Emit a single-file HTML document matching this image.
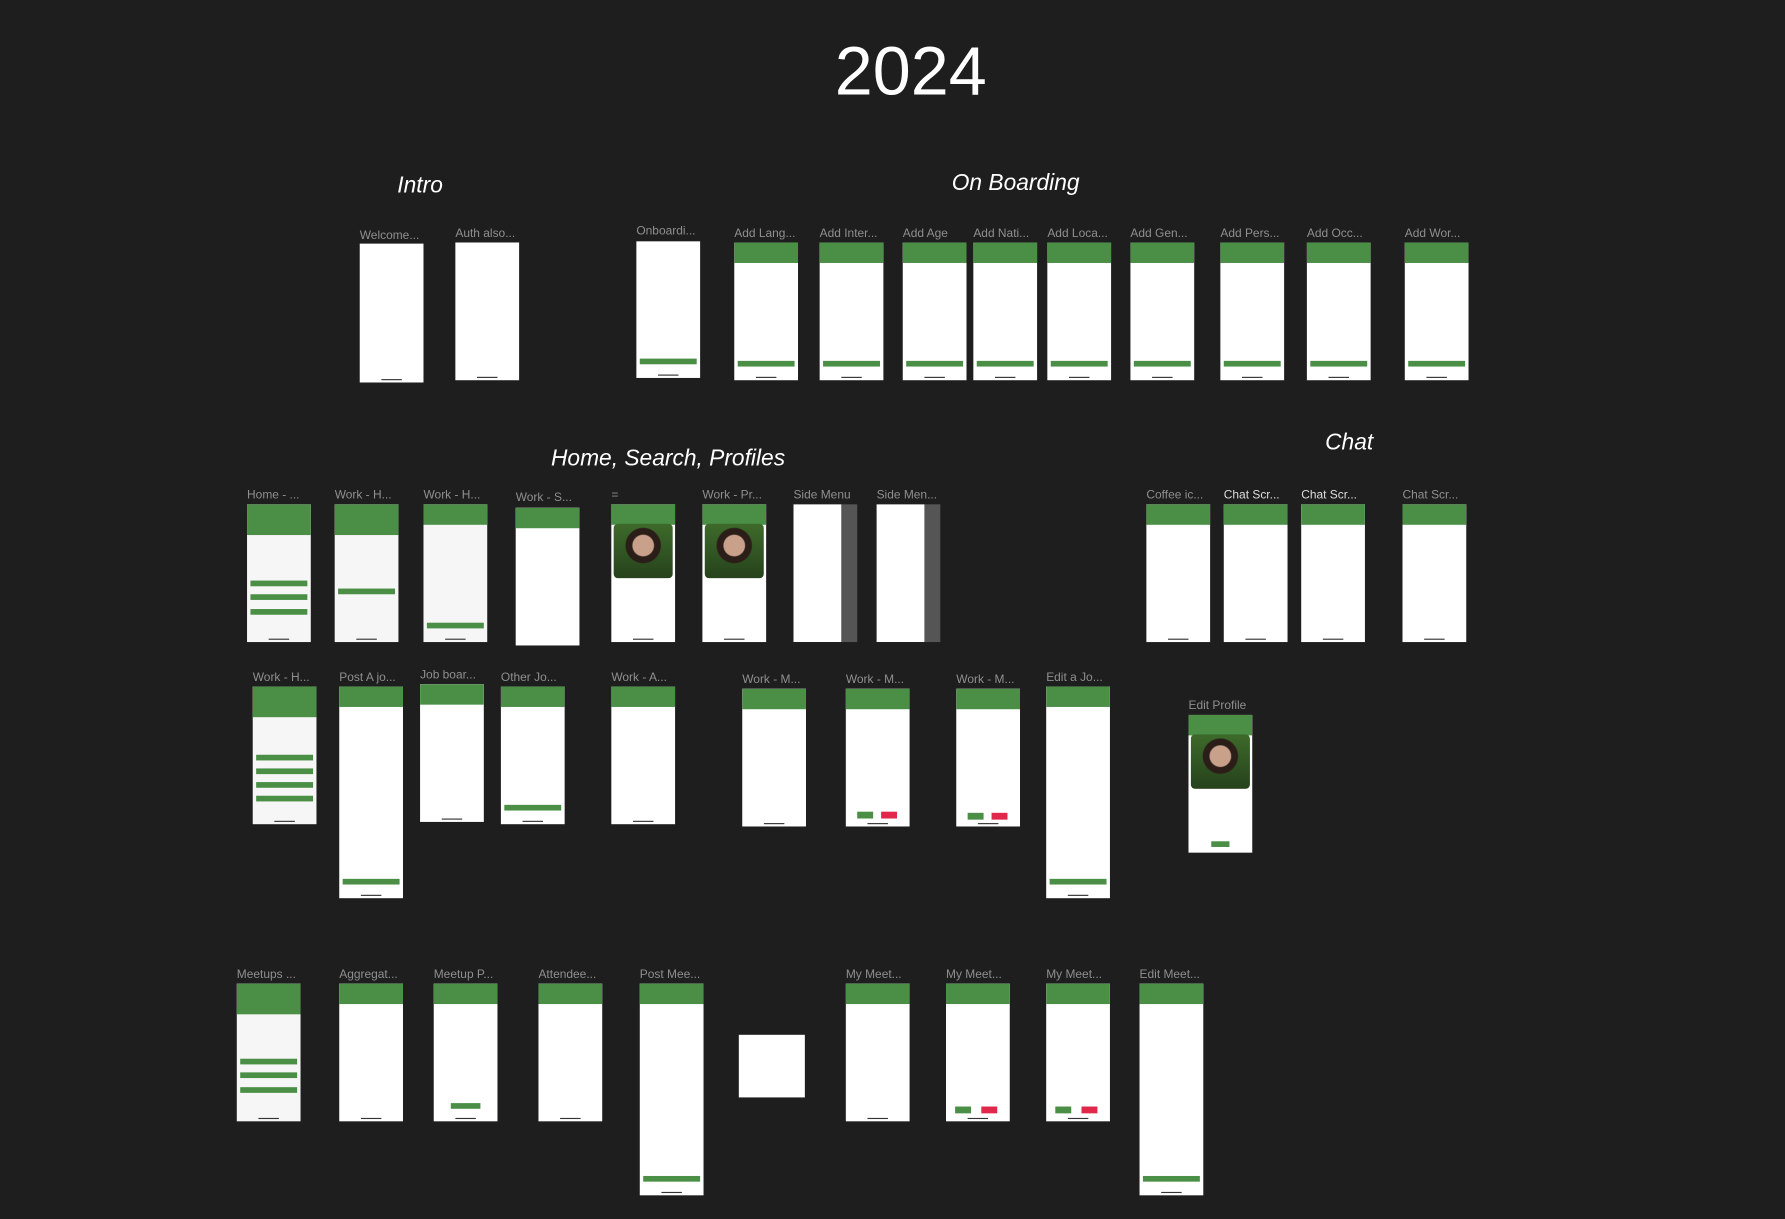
<!DOCTYPE html>
<html><head><meta charset="utf-8"><style>
html,body{margin:0;padding:0;background:#1e1e1e;overflow:hidden}
#s{position:absolute;left:0;top:0;width:1568px;height:1071px;transform:scale(1.1384);transform-origin:0 0;font-family:"Liberation Sans",sans-serif}
.f{position:absolute;background:#fff;width:56px;height:121px;overflow:hidden}
.g{position:absolute;left:0;top:0;width:100%;height:18px;background:#4b8f47}
.G{position:absolute;left:0;top:0;width:100%;height:27px;background:#4b8f47}
.b{position:absolute;left:3px;right:3px;bottom:12px;height:5px;background:#4b8f47}
.h{position:absolute;left:19px;bottom:2px;width:18px;height:1.5px;background:#333}
.l{position:absolute;color:#8f8f8f;font-size:10.5px;white-space:nowrap}
.t{position:absolute;color:#fff;font-style:italic;font-size:20px}
.p{position:absolute;left:2px;top:17px;width:52px;height:48px;border-radius:4px;background:radial-gradient(circle at 50% 40%,#c9a08a 0 9px,#2b1d18 10px 15px,transparent 16px),linear-gradient(#3d6a2a,#26421c)}
.x{position:absolute;left:4px;height:1.5px;background:#ccc}
.m{position:absolute;left:3px;width:50px;height:5px;background:#4b8f47}
</style></head><body><div id="s">
<div style="position:absolute;left:0;width:1600px;top:28px;text-align:center;color:#fff;font-size:60px">2024</div>
<div class="t" style="left:349px;top:152px">Intro</div>
<div class="t" style="left:836px;top:150px">On Boarding</div>
<div class="t" style="left:484px;top:392px">Home, Search, Profiles</div>
<div class="t" style="left:1164px;top:378px">Chat</div>

<!-- row 1 -->
<div class="l" style="left:316px;top:201px">Welcome...</div><div class="f" style="left:316px;top:214px;height:122px"><div class="h"></div></div>
<div class="l" style="left:400px;top:199px">Auth also...</div><div class="f" style="left:400px;top:213px"><div class="h"></div></div>
<div class="l" style="left:559px;top:197px">Onboardi...</div><div class="f" style="left:559px;top:212px;height:120px"><div class="b"></div><div class="h"></div></div>
<div class="l" style="left:645px;top:199px">Add Lang...</div><div class="f" style="left:645px;top:213px"><div class="g"></div><div class="b"></div><div class="h"></div></div>
<div class="l" style="left:720px;top:199px">Add Inter...</div><div class="f" style="left:720px;top:213px"><div class="g"></div><div class="b"></div><div class="h"></div></div>
<div class="l" style="left:793px;top:199px">Add Age</div><div class="f" style="left:793px;top:213px"><div class="g"></div><div class="b"></div><div class="h"></div></div>
<div class="l" style="left:855px;top:199px">Add Nati...</div><div class="f" style="left:855px;top:213px"><div class="g"></div><div class="b"></div><div class="h"></div></div>
<div class="l" style="left:920px;top:199px">Add Loca...</div><div class="f" style="left:920px;top:213px"><div class="g"></div><div class="b"></div><div class="h"></div></div>
<div class="l" style="left:993px;top:199px">Add Gen...</div><div class="f" style="left:993px;top:213px"><div class="g"></div><div class="b"></div><div class="h"></div></div>
<div class="l" style="left:1072px;top:199px">Add Pers...</div><div class="f" style="left:1072px;top:213px"><div class="g"></div><div class="b"></div><div class="h"></div></div>
<div class="l" style="left:1148px;top:199px">Add Occ...</div><div class="f" style="left:1148px;top:213px"><div class="g"></div><div class="b"></div><div class="h"></div></div>
<div class="l" style="left:1234px;top:199px">Add Wor...</div><div class="f" style="left:1234px;top:213px"><div class="g"></div><div class="b"></div><div class="h"></div></div>

<!-- row 2 -->
<div class="l" style="left:217px;top:429px">Home - ...</div><div class="f" style="left:217px;top:443px;background:#f6f6f6"><div class="G"></div><div class="m" style="top:67px"></div><div class="m" style="top:79px"></div><div class="m" style="top:92px"></div><div class="h"></div></div>
<div class="l" style="left:294px;top:429px">Work - H...</div><div class="f" style="left:294px;top:443px;background:#f6f6f6"><div class="G"></div><div class="m" style="top:74px"></div><div class="h"></div></div>
<div class="l" style="left:372px;top:429px">Work - H...</div><div class="f" style="left:372px;top:443px;background:#f6f6f6"><div class="g"></div><div class="m" style="top:104px"></div><div class="h"></div></div>
<div class="l" style="left:453px;top:431px">Work - S...</div><div class="f" style="left:453px;top:446px"><div class="g"></div></div>
<div class="l" style="left:537px;top:429px">=</div><div class="f" style="left:537px;top:443px"><div class="g"></div><div class="p"></div><div class="h"></div></div>
<div class="l" style="left:617px;top:429px">Work - Pr...</div><div class="f" style="left:617px;top:443px"><div class="g"></div><div class="p"></div><div class="h"></div></div>
<div class="l" style="left:697px;top:429px">Side Menu</div><div class="f" style="left:697px;top:443px;background:#555"><div style="position:absolute;left:0;top:0;width:42px;height:121px;background:#fff"></div></div>
<div class="l" style="left:770px;top:429px">Side Men...</div><div class="f" style="left:770px;top:443px;background:#555"><div style="position:absolute;left:0;top:0;width:42px;height:121px;background:#fff"></div></div>
<div class="l" style="left:1007px;top:429px">Coffee ic...</div><div class="f" style="left:1007px;top:443px"><div class="g"></div><div class="h"></div></div>
<div class="l" style="left:1075px;top:429px;color:#ddd">Chat Scr...</div><div class="f" style="left:1075px;top:443px"><div class="g"></div><div class="h"></div></div>
<div class="l" style="left:1143px;top:429px;color:#ddd">Chat Scr...</div><div class="f" style="left:1143px;top:443px"><div class="g"></div><div class="h"></div></div>
<div class="l" style="left:1232px;top:429px">Chat Scr...</div><div class="f" style="left:1232px;top:443px"><div class="g"></div><div class="h"></div></div>

<!-- row 3 -->
<div class="l" style="left:222px;top:589px">Work - H...</div><div class="f" style="left:222px;top:603px;background:#f6f6f6"><div class="G"></div><div class="m" style="top:60px"></div><div class="m" style="top:72px"></div><div class="m" style="top:84px"></div><div class="m" style="top:96px"></div><div class="h"></div></div>
<div class="l" style="left:298px;top:589px">Post A jo...</div><div class="f" style="left:298px;top:603px;height:186px"><div class="g"></div><div class="b"></div><div class="h"></div></div>
<div class="l" style="left:369px;top:587px">Job boar...</div><div class="f" style="left:369px;top:601px"><div class="g"></div><div class="h"></div></div>
<div class="l" style="left:440px;top:589px">Other Jo...</div><div class="f" style="left:440px;top:603px"><div class="g"></div><div class="b"></div><div class="h"></div></div>
<div class="l" style="left:537px;top:589px">Work - A...</div><div class="f" style="left:537px;top:603px"><div class="g"></div><div class="h"></div></div>
<div class="l" style="left:652px;top:591px">Work - M...</div><div class="f" style="left:652px;top:605px"><div class="g"></div><div class="h"></div></div>
<div class="l" style="left:743px;top:591px">Work - M...</div><div class="f" style="left:743px;top:605px"><div class="g"></div><div style="position:absolute;left:10px;top:108px;width:14px;height:6px;background:#4b8f47"></div><div style="position:absolute;left:31px;top:108px;width:14px;height:6px;background:#e0284a"></div><div class="h"></div></div>
<div class="l" style="left:840px;top:591px">Work - M...</div><div class="f" style="left:840px;top:605px"><div class="g"></div><div style="position:absolute;left:10px;top:109px;width:14px;height:6px;background:#4b8f47"></div><div style="position:absolute;left:31px;top:109px;width:14px;height:6px;background:#e0284a"></div><div class="h"></div></div>
<div class="l" style="left:919px;top:589px">Edit a Jo...</div><div class="f" style="left:919px;top:603px;height:186px"><div class="g"></div><div class="b"></div><div class="h"></div></div>
<div class="l" style="left:1044px;top:614px">Edit Profile</div><div class="f" style="left:1044px;top:628px"><div class="g"></div><div class="p"></div><div style="position:absolute;left:20px;top:111px;width:16px;height:5px;background:#4b8f47"></div></div>

<!-- row 4 -->
<div class="l" style="left:208px;top:850px">Meetups ...</div><div class="f" style="left:208px;top:864px;background:#f6f6f6"><div class="G"></div><div class="m" style="top:66px"></div><div class="m" style="top:78px"></div><div class="m" style="top:91px"></div><div class="h"></div></div>
<div class="l" style="left:298px;top:850px">Aggregat...</div><div class="f" style="left:298px;top:864px"><div class="g"></div><div class="h"></div></div>
<div class="l" style="left:381px;top:850px">Meetup P...</div><div class="f" style="left:381px;top:864px"><div class="g"></div><div class="m" style="top:105px;left:15px;width:26px"></div><div class="h"></div></div>
<div class="l" style="left:473px;top:850px">Attendee...</div><div class="f" style="left:473px;top:864px"><div class="g"></div><div class="h"></div></div>
<div class="l" style="left:562px;top:850px">Post Mee...</div><div class="f" style="left:562px;top:864px;height:186px"><div class="g"></div><div class="b"></div><div class="h"></div></div>
<div class="f" style="left:649px;top:909px;width:58px;height:55px"></div>
<div class="l" style="left:743px;top:850px">My Meet...</div><div class="f" style="left:743px;top:864px"><div class="g"></div><div class="h"></div></div>
<div class="l" style="left:831px;top:850px">My Meet...</div><div class="f" style="left:831px;top:864px"><div class="g"></div><div style="position:absolute;left:8px;top:108px;width:14px;height:6px;background:#4b8f47"></div><div style="position:absolute;left:31px;top:108px;width:14px;height:6px;background:#e0284a"></div><div class="h"></div></div>
<div class="l" style="left:919px;top:850px">My Meet...</div><div class="f" style="left:919px;top:864px"><div class="g"></div><div style="position:absolute;left:8px;top:108px;width:14px;height:6px;background:#4b8f47"></div><div style="position:absolute;left:31px;top:108px;width:14px;height:6px;background:#e0284a"></div><div class="h"></div></div>
<div class="l" style="left:1001px;top:850px">Edit Meet...</div><div class="f" style="left:1001px;top:864px;height:186px"><div class="g"></div><div class="b"></div><div class="h"></div></div>
</div></body></html>
